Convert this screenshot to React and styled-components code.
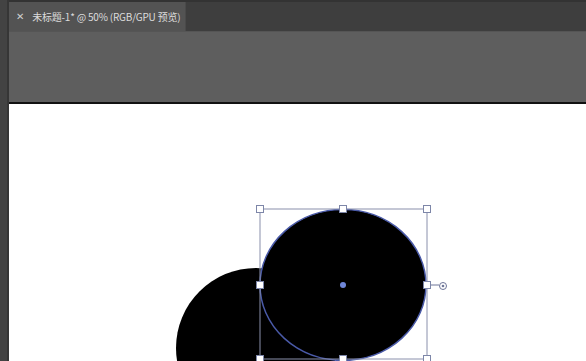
import React from "react"
import styled, { createGlobalStyle } from "styled-components"

const Global = createGlobalStyle`
  html, body { margin: 0; padding: 0; background: #3d3d3d; }
  body { font-family: "Noto Sans CJK SC", "Liberation Sans", sans-serif; }
`

const Shell = styled.div`
  display: flex;
  width: 586px;
  height: 361px;
  overflow: hidden;
`

const Gutter = styled.div`
  width: 7px;
  flex: none;
  background: #434343;
  border-right: 2px solid #363636;
`

const Main = styled.div`
  flex: 1;
  display: flex;
  flex-direction: column;
  min-width: 0;
`

const TabBar = styled.div`
  height: 29px;
  flex: none;
  display: flex;
  align-items: stretch;
  background: #3e3e3e;
  border-top: 2px solid #333;
`

const Tab = styled.div`
  display: flex;
  align-items: center;
  gap: 8px;
  padding: 0 8px 0 7px;
  width: 177px;
  box-sizing: border-box;
  background: #535353;
  border-right: 1px solid #4a4a4a;
  color: #dcdcdc;
  font-size: 10px;
  letter-spacing: -0.2px;
  white-space: nowrap;
  overflow: hidden;
`

const Close = styled.span`
  font-family: "DejaVu Sans", sans-serif;
  font-size: 10px;
  color: #cfcfcf;
`

const Options = styled.div`
  height: 70px;
  flex: none;
  background: #5e5e5e;
  border-top: 1px solid #555;
  border-bottom: 2px solid #111;
`

const Canvas = styled.div`
  flex: 1;
  background: #fff;
  overflow: hidden;
  svg { display: block; }
`

const Handle = ({ x, y }) => (
  <rect x={x - 3.5} y={y - 3.5} width="7" height="7" fill="#fff" stroke="#7d86a8" strokeWidth="1" />
)

export default function App() {
  const handles = [
    [260, 208], [343, 208], [427, 208],
    [260, 284], [427, 284],
    [260, 358], [343, 358], [427, 358],
  ]
  return (
    <>
      <Global />
      <Shell>
        <Gutter />
        <Main>
          <TabBar>
            <Tab>
              <Close>✕</Close>
              <span>未标题-1* @ 50% (RGB/GPU 预览)</span>
            </Tab>
          </TabBar>
          <Options />
          <Canvas>
            <svg width="577" height="258">
              <g transform="translate(-9,-103)">
                <circle cx="256" cy="347" r="80" fill="#000" />
                <ellipse cx="343" cy="284" rx="83" ry="75.5" fill="#000" stroke="#4a5aa8" strokeWidth="1.5" />
                <rect x="260" y="208" width="167" height="150" fill="none" stroke="#8a90ac" strokeWidth="1" />
                <line x1="427" y1="284" x2="439" y2="284" stroke="#6d7598" strokeWidth="1" />
                <circle cx="443" cy="285" r="3.5" fill="#fff" stroke="#6d7598" strokeWidth="1" />
                <circle cx="443" cy="285" r="1.3" fill="#6d7598" />
                {handles.map(([x, y]) => <Handle key={x + "-" + y} x={x} y={y} />)}
                <circle cx="343" cy="284" r="3" fill="#6f86d8" />
              </g>
            </svg>
          </Canvas>
        </Main>
      </Shell>
    </>
  )
}
